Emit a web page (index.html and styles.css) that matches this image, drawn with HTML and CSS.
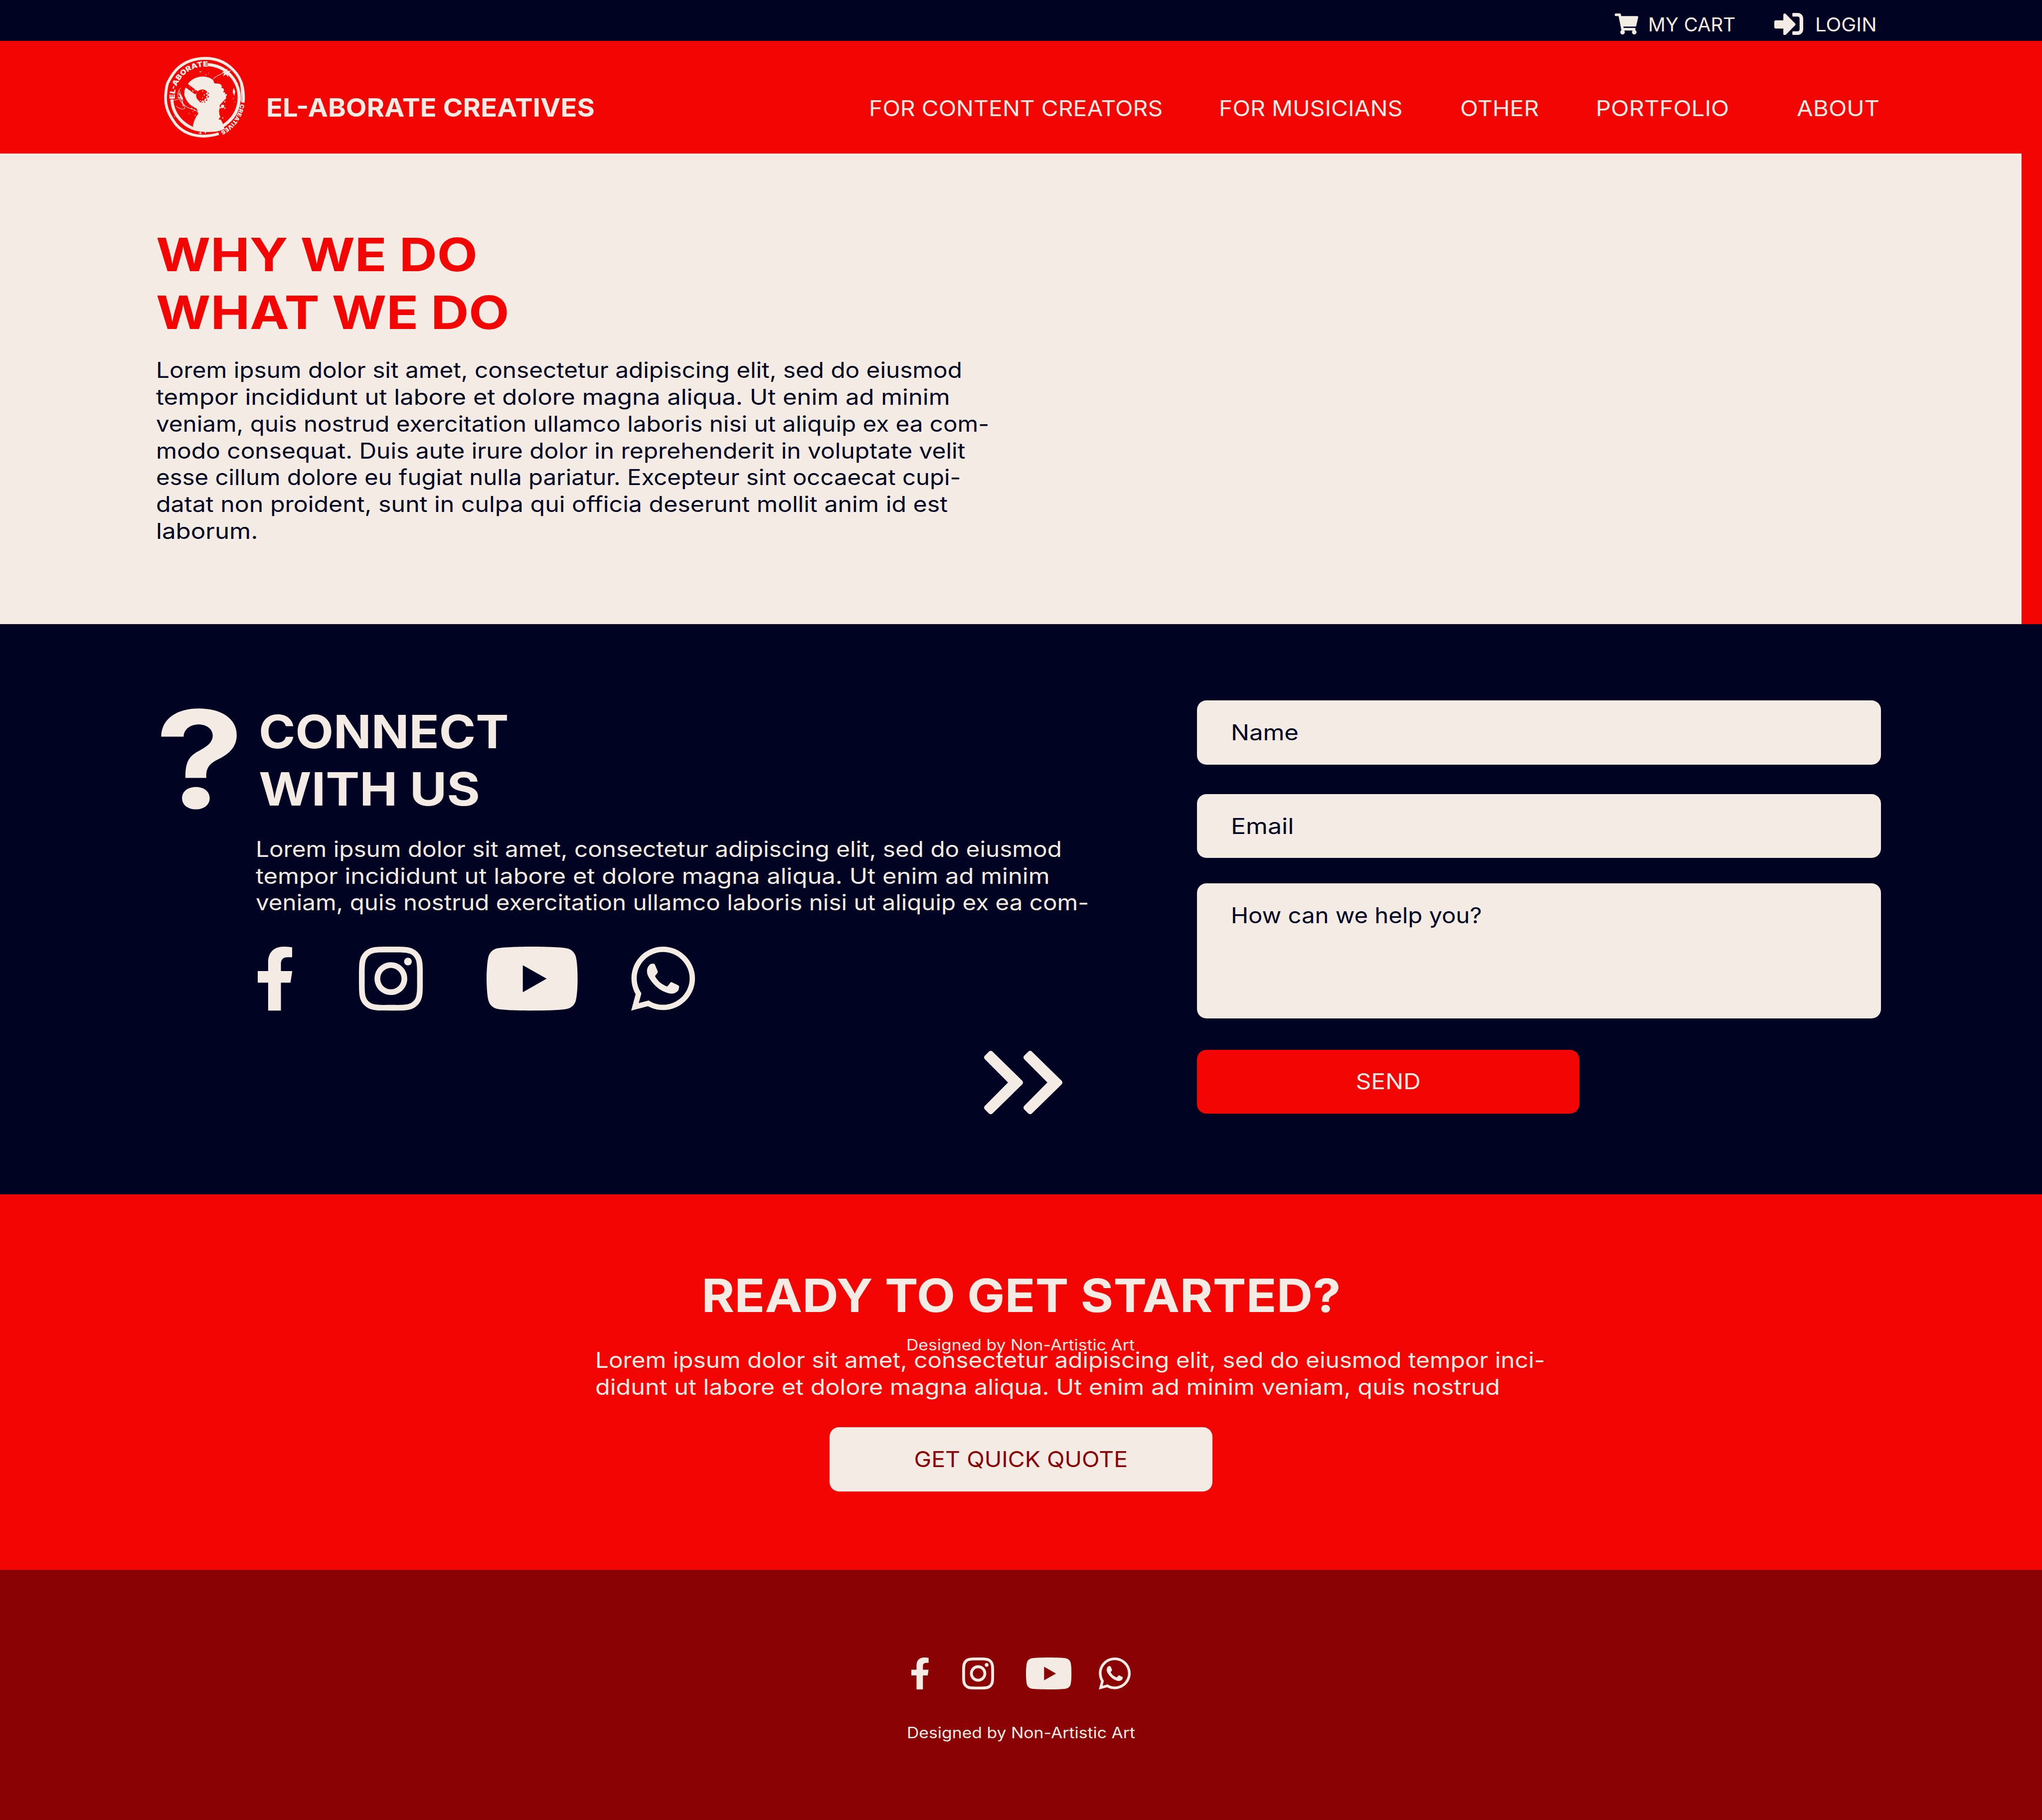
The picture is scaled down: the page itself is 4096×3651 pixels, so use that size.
FILE: index.html
```
<!DOCTYPE html>
<html lang="en">
<head>
<meta charset="utf-8">
<title>El-aborate Creatives</title>
<link rel="stylesheet" href="styles.css">
</head>
<body>
<svg class="sprite" aria-hidden="true">
  <symbol id="facebook" viewBox="22.9 0 270.5 512" preserveAspectRatio="none"><path d="M279.14 288l14.22-92.66h-88.91v-60.13c0-25.35 12.42-50.06 52.24-50.06h40.42V6.26S260.43 0 225.36 0c-73.22 0-121.08 44.38-121.08 124.72v70.62H22.89V288h81.39v224h100.17V288z"/></symbol>
  <symbol id="instagram" viewBox="0 32 448 448" preserveAspectRatio="none"><path d="M224.1 141c-63.6 0-114.9 51.3-114.9 114.9s51.3 114.9 114.9 114.9S339 319.5 339 255.9 287.7 141 224.1 141zm0 189.6c-41.1 0-74.7-33.5-74.7-74.7s33.5-74.7 74.7-74.7 74.7 33.5 74.7 74.7-33.6 74.7-74.7 74.7zm146.4-194.3c0 14.9-12 26.8-26.8 26.8-14.9 0-26.8-12-26.8-26.8s12-26.8 26.8-26.8 26.8 12 26.8 26.8zm76.1 27.2c-1.7-35.9-9.9-67.7-36.2-93.9-26.2-26.2-58-34.4-93.9-36.2-37-2.1-147.9-2.1-184.9 0-35.8 1.7-67.6 9.9-93.9 36.1s-34.4 58-36.2 93.9c-2.1 37-2.1 147.9 0 184.9 1.7 35.9 9.9 67.7 36.2 93.9s58 34.4 93.9 36.2c37 2.1 147.9 2.1 184.9 0 35.9-1.7 67.7-9.9 93.9-36.2 26.2-26.2 34.4-58 36.2-93.9 2.1-37 2.1-147.8 0-184.8zM398.8 388c-7.8 19.6-22.9 34.7-42.6 42.6-29.5 11.7-99.5 9-132.1 9s-102.7 2.6-132.1-9c-19.6-7.8-34.7-22.9-42.6-42.6-11.7-29.5-9-99.5-9-132.1s-2.6-102.7 9-132.1c7.8-19.6 22.9-34.7 42.6-42.6 29.5-11.7 99.5-9 132.1-9s102.7-2.6 132.1 9c19.6 7.8 34.7 22.9 42.6 42.6 11.7 29.5 9 99.5 9 132.1s2.7 102.7-9 132.1z"/></symbol>
  <symbol id="youtube" viewBox="14.9 64 546.2 384" preserveAspectRatio="none"><path d="M549.655 124.083c-6.281-23.65-24.787-42.276-48.284-48.597C458.781 64 288 64 288 64S117.22 64 74.629 75.486c-23.497 6.322-42.003 24.947-48.284 48.597-11.412 42.867-11.412 132.305-11.412 132.305s0 89.438 11.412 132.305c6.281 23.65 24.787 41.5 48.284 47.821C117.22 448 288 448 288 448s170.78 0 213.371-11.486c23.497-6.321 42.003-24.171 48.284-47.821 11.412-42.867 11.412-132.305 11.412-132.305s0-89.438-11.412-132.305zm-317.51 213.508V175.185l142.739 81.205-142.739 81.201z"/></symbol>
  <symbol id="whatsapp" viewBox="0 32 448 448" preserveAspectRatio="none"><path d="M380.9 97.1C339 55.1 283.2 32 223.9 32c-122.4 0-222 99.6-222 222 0 39.1 10.2 77.3 29.6 111L0 480l117.7-30.9c32.4 17.7 68.9 27 106.1 27h.1c122.3 0 224.1-99.6 224.1-222 0-59.3-25.2-115-67.1-157zm-157 341.6c-33.2 0-65.7-8.9-94-25.7l-6.7-4-69.8 18.3L72 359.2l-4.4-7c-18.5-29.4-28.2-63.3-28.2-98.2 0-101.7 82.8-184.5 184.6-184.5 49.3 0 95.6 19.2 130.4 54.1 34.8 34.9 56.2 81.2 56.1 130.5 0 101.8-84.9 184.6-186.6 184.6zm101.2-138.2c-5.5-2.8-32.8-16.2-37.9-18-5.1-1.9-8.8-2.8-12.5 2.8-3.7 5.6-14.3 18-17.6 21.8-3.2 3.7-6.5 4.2-12 1.4-32.6-16.3-54-29.1-75.5-66-5.7-9.8 5.7-9.1 16.3-30.3 1.8-3.7.9-6.9-.5-9.7-1.4-2.8-12.5-30.1-17.1-41.2-4.5-10.8-9.1-9.3-12.5-9.5-3.2-.2-6.9-.2-10.6-.2-3.7 0-9.7 1.4-14.8 6.9-5.1 5.6-19.4 19-19.4 46.3 0 27.3 19.9 53.7 22.6 57.4 2.8 3.7 39.1 59.7 94.8 83.8 35.2 15.2 49 16.5 66.6 13.9 10.7-1.6 32.8-13.4 37.4-26.4 4.6-13 4.6-24.1 3.2-26.4-1.3-2.5-5-3.9-10.5-6.6z"/></symbol>
</svg>

<div class="topbar">
  <svg class="cart-icon" viewBox="0 0 576 512" preserveAspectRatio="none"><path d="M528.12 301.319l47.273-208C578.806 78.301 567.391 64 551.99 64H159.208l-9.166-44.81C147.758 8.021 137.93 0 126.529 0H24C10.745 0 0 10.745 0 24v16c0 13.255 10.745 24 24 24h69.883l70.248 343.435C147.325 417.1 136 435.222 136 456c0 30.928 25.072 56 56 56s56-25.072 56-56c0-15.674-6.447-29.835-16.824-40h209.647C430.447 426.165 424 440.326 424 456c0 30.928 25.072 56 56 56s56-25.072 56-56c0-22.172-12.888-41.332-31.579-50.405l5.517-24.276c3.413-15.018-8.002-29.319-23.403-29.319H218.117l-6.545-32h293.145c11.206 0 20.92-7.754 23.403-18.681z"/></svg>
  <a class="fit cart">MY CART</a>
  <svg class="login-icon" viewBox="0 64 512 384" preserveAspectRatio="none"><path d="M416 448h-84c-6.6 0-12-5.4-12-12v-40c0-6.6 5.4-12 12-12h84c17.7 0 32-14.3 32-32V160c0-17.7-14.3-32-32-32h-84c-6.6 0-12-5.4-12-12V76c0-6.6 5.4-12 12-12h84c53 0 96 43 96 96v192c0 53-43 96-96 96zm-47-201L201 79c-15-15-41-4.5-41 17v96H24c-13.3 0-24 10.7-24 24v96c0 13.3 10.7 24 24 24h136v96c0 21.5 26 32 41 17l168-168c9.3-9.4 9.3-24.6 0-34z"/></svg>
  <a class="fit login">LOGIN</a>
</div>

<header class="header">
  <svg class="logo" viewBox="0 0 810 810">
    <defs>
      <path id="arc-top" d="M171 417A237 237 0 0 1 460 168"/>
      <path id="arc-side" d="M684 454A289 289 0 0 1 510 678"/>
    </defs>
    <g fill="none" stroke="#f3ebe4">
      <path stroke-width="22" d="M515 688C360 735 240 690 175 610C120 535 92 470 99 385C102 345 105 315 115 290C140 240 165 200 200 170C260 120 330 97 410 98C500 97 570 130 625 185C665 225 690 270 700 320C706 350 712 400 706 445"/>
      <path stroke-width="24" d="M147 420A257 257 0 0 0 405 662A257 257 0 0 0 428 147"/>
      <path stroke-width="7" d="M686 300Q696 370 690 440"/>
      <path stroke-width="4" d="M472 262Q475 245 555 210M205 350l20 50-30 5 40 15M195 365l35 40 5 70M180 472q35 28 62 22q20-8-15-45q-28-35-32-60q-5-30 22-60M212 400q20 80 95 95q30 5 52 35M160 428l40-10"/>
      <path stroke-width="9" d="M205 375l25 45M632 335v40"/>
    </g>
    <g fill="#f3ebe4">
      <path d="M395 240C430 242 460 255 472 270L480 292C495 298 515 292 530 302L540 315L535 328L553 335L556 350L549 362L565 365L565 382L572 390V412L552 432L522 465L523 485L517 510L520 540L528 555L513 575L532 580L545 605L560 650C510 676 455 676 400 674C365 668 335 650 312 630C318 590 335 555 357 528L340 490C300 475 260 440 246 390C242 360 248 335 258 322L275 295C300 262 340 240 395 240Z"/>
      <path d="M555 180l8 18 22-22-6 24 38-10-26 18 20 20-24-8 2 26-18-22-22 14 8-26-20-6 22-6zM630 335l14 20-8 38-12-34zM402 674l10 18 2-18zM355 685l22-12 2 18z"/>
      <circle cx="367" cy="203" r="4"/><circle cx="376" cy="203" r="4"/><circle cx="415" cy="227" r="4"/><circle cx="435" cy="214" r="3"/><circle cx="545" cy="474" r="13"/><circle cx="563" cy="488" r="6"/><circle cx="530" cy="484" r="6"/><circle cx="573" cy="384" r="7"/><circle cx="562" cy="438" r="5"/><circle cx="546" cy="565" r="5"/><circle cx="168" cy="554" r="4"/><circle cx="283" cy="530" r="4"/><circle cx="312" cy="515" r="3"/><circle cx="302" cy="490" r="5"/><circle cx="325" cy="505" r="5"/><circle cx="330" cy="545" r="4"/><circle cx="630" cy="412" r="4"/><circle cx="641" cy="440" r="3"/>
      <text class="seal-top"><textPath href="#arc-top" textLength="412" lengthAdjust="spacingAndGlyphs">EL-ABORATE</textPath></text>
      <text class="seal-side"><textPath href="#arc-side" textLength="276" lengthAdjust="spacingAndGlyphs">CREATIVES</textPath></text>
    </g>
    <g fill="#f30504">
      <path d="M240 312L270 296L352 358L330 380L254 325Z"/>
      <path d="M388 342C405 342 420 352 425 365L410 375L430 384L412 398L425 410L404 415L402 432L385 428L372 445L345 415C330 390 335 345 388 342Z"/>
      <circle cx="433" cy="372" r="5"/><circle cx="420" cy="425" r="6"/><circle cx="432" cy="398" r="6"/><circle cx="404" cy="440" r="5"/><circle cx="385" cy="442" r="4"/><circle cx="659" cy="278" r="5"/><circle cx="670" cy="308" r="4"/><circle cx="265" cy="145" r="5"/>
    </g>
    <g fill="#f3ebe4"><circle cx="312" cy="353" r="5"/><circle cx="328" cy="346" r="4"/><circle cx="286" cy="320" r="3"/><circle cx="390" cy="355" r="4"/><circle cx="402" cy="385" r="5"/><circle cx="388" cy="408" r="4"/><circle cx="372" cy="430" r="4"/></g>
  </svg>
  <div class="brand"><span class="fit">EL-ABORATE CREATIVES</span></div>
  <nav class="nav">
    <a class="fit nav-creators">FOR CONTENT CREATORS</a>
    <a class="fit nav-musicians">FOR MUSICIANS</a>
    <a class="fit nav-other">OTHER</a>
    <a class="fit nav-portfolio">PORTFOLIO</a>
    <a class="fit nav-about">ABOUT</a>
  </nav>
</header>

<section class="why">
  <h2 class="title title-why"><span class="fit w1">WHY WE DO</span><span class="fit w2">WHAT WE DO</span></h2>
  <p class="copy">
    <span class="fit t1">Lorem ipsum dolor sit amet, consectetur adipiscing elit, sed do eiusmod</span>
    <span class="fit t2">tempor incididunt ut labore et dolore magna aliqua. Ut enim ad minim</span>
    <span class="fit t3">veniam, quis nostrud exercitation ullamco laboris nisi ut aliquip ex ea com-</span>
    <span class="fit t4">modo consequat. Duis aute irure dolor in reprehenderit in voluptate velit</span>
    <span class="fit t5">esse cillum dolore eu fugiat nulla pariatur. Excepteur sint occaecat cupi-</span>
    <span class="fit t6">datat non proident, sunt in culpa qui officia deserunt mollit anim id est</span>
    <span class="fit t7">laborum.</span>
  </p>
</section>

<section class="connect">
  <div class="mark">?</div>
  <div class="connect-body">
    <h2 class="title title-connect"><span class="fit c1">CONNECT</span><span class="fit c2">WITH US</span></h2>
    <p class="copy">
      <span class="fit t1">Lorem ipsum dolor sit amet, consectetur adipiscing elit, sed do eiusmod</span>
      <span class="fit t2">tempor incididunt ut labore et dolore magna aliqua. Ut enim ad minim</span>
      <span class="fit t3">veniam, quis nostrud exercitation ullamco laboris nisi ut aliquip ex ea com-</span>
    </p>
    <div class="social">
      <svg class="fb"><use href="#facebook"/></svg>
      <svg class="ig"><use href="#instagram"/></svg>
      <svg class="yt"><use href="#youtube"/></svg>
      <svg class="wa"><use href="#whatsapp"/></svg>
    </div>
    <svg class="chevrons" viewBox="0 0 156.7 129.3">
      <path d="M13.3 6L73 64.6L13.3 123.3L5 115L55 64.6L5 14.3Z"/>
      <path d="M92.3 6L152 64.6L92.3 123.3L84 115L134 64.6L84 14.3Z"/>
    </svg>
  </div>
  <form class="form">
    <div class="field field-name"><span class="fit">Name</span></div>
    <div class="field field-email"><span class="fit">Email</span></div>
    <div class="field field-message"><span class="fit">How can we help you?</span></div>
    <div class="button send"><span class="fit centered">SEND</span></div>
  </form>
</section>

<section class="cta">
  <h2 class="title fit centered title-cta">READY TO GET STARTED?</h2>
  <div class="credit credit-overlay fit">Designed by Non-Artistic Art</div>
  <p class="copy cta-copy">
    <span class="fit q1">Lorem ipsum dolor sit amet, consectetur adipiscing elit, sed do eiusmod tempor inci-</span>
    <span class="fit q2">didunt ut labore et dolore magna aliqua. Ut enim ad minim veniam, quis nostrud</span>
  </p>
  <div class="button quote"><span class="fit centered">GET QUICK QUOTE</span></div>
</section>

<footer class="footer">
  <div class="social social-small">
    <svg class="fb"><use href="#facebook"/></svg>
    <svg class="ig"><use href="#instagram"/></svg>
    <svg class="yt"><use href="#youtube"/></svg>
    <svg class="wa"><use href="#whatsapp"/></svg>
  </div>
  <div class="credit fit centered">Designed by Non-Artistic Art</div>
</footer>
</body>
</html>
```
FILE: styles.css
```
* { box-sizing: border-box; }

:root {
  --cream: #f3ebe4;
  --red: #f30504;
  --navy: #000422;
  --maroon: #8a0203;
}

body {
  margin: 0;
  width: 4096px;
  height: 3651px;
  overflow: hidden;
  display: flex;
  flex-direction: column;
  font-family: Inter, "Liberation Sans", sans-serif;
  font-size: 43.1px;
  line-height: 53.76px;
  color: var(--cream);
  background: var(--maroon);
  white-space: nowrap;
}

svg { display: block; fill: currentColor; }
.sprite { position: absolute; width: 0; height: 0; }
h2, p { margin: 0; }

/* Widened lettering: --s is the horizontal stretch of a line */
.fit {
  display: block;
  width: max-content;
  transform: scaleX(var(--s, 1));
  transform-origin: left;
}
.fit.centered { margin-left: auto; margin-right: auto; transform-origin: center; }

/* Top bar */
.topbar {
  height: 82.2px;
  flex: none;
  padding: 26.1px 0 0 3238.9px;
  display: grid;
  grid-template-columns: 66.9px 253.2px 81.8px auto;
  align-items: start;
  background: var(--navy);
  font-size: 37.7px;
  line-height: 47.4px;
}
.cart-icon { width: 47px; height: 42.2px; margin-top: 0.8px; }
.login-icon { width: 58px; height: 44px; }
.cart { --s: 1.021; }
.login { --s: 1.067; }

/* Header */
.header {
  height: 225.5px;
  flex: none;
  display: flex;
  align-items: flex-start;
  padding-left: 307.2px;
  background: var(--red);
}
.logo { width: 207.4px; height: 207.4px; margin-top: 10px; flex: none; }
.seal-top { font-size: 56px; font-weight: 900; }
.seal-side { font-size: 45px; font-weight: 900; }
.brand {
  --s: 1.054;
  width: 1209.2px;
  margin: 102.9px 0 0 19px;
  font-size: 51.4px;
  line-height: 60px;
  font-weight: 700;
}
.nav {
  margin-top: 108.8px;
  display: grid;
  grid-template-columns: 702.2px 483.7px 272px 403.8px auto;
}
.nav-creators { --s: 1.0765; }
.nav-musicians { --s: 1.079; }
.nav-other { --s: 1.088; }
.nav-portfolio { --s: 1.0986; }
.nav-about { --s: 1.103; }

/* Shared text */
.title { font-size: 92.4px; line-height: 115.2px; font-weight: 700; }
.title-why { color: var(--red); }
.w1 { --s: 1.139; }
.w2 { --s: 1.141; }
.title-connect { margin-left: 6.5px; }
.c1 { --s: 1.075; }
.c2 { --s: 1.103; }
.title-cta { --s: 1.088; }
.t1 { --s: 1.1063; }
.t2 { --s: 1.136; }
.t3 { --s: 1.104; }
.t4 { --s: 1.112; }
.t5 { --s: 1.0987; }
.t6 { --s: 1.121; }
.t7 { --s: 1.144; }
.q1 { --s: 1.1067; }
.q2 { --s: 1.127; }

/* Why we do what we do */
.why {
  height: 944.5px;
  flex: none;
  padding: 145.8px 0 0 313px;
  background: var(--cream);
  border-right: 41px solid var(--red);
}
.why .copy { margin-top: 32.4px; color: var(--navy); }

/* Connect */
.connect {
  height: 1143.4px;
  flex: none;
  display: flex;
  align-items: flex-start;
  padding: 157.8px 0 0 311.2px;
  background: var(--navy);
}
.mark {
  width: 201.5px;
  margin-top: -23.4px;
  font-size: 271px;
  line-height: 270px;
  font-weight: 700;
  transform: scaleX(1.18);
  transform-origin: left;
}
.connect-body { width: 1887.9px; }
.connect-body .copy { margin-top: 36.5px; }
.social { display: flex; margin: 61.1px 0 0 4.3px; }
.social svg { height: 128.4px; }
.fb { width: 69.3px; }
.ig { width: 128.1px; margin-left: 133.6px; }
.yt { width: 182.8px; margin-left: 128.2px; }
.wa { width: 128.1px; margin-left: 107.5px; }
.chevrons {
  width: 156.7px;
  height: 129.3px;
  margin: 79.2px 0 0 1461.3px;
  stroke: currentColor;
  stroke-width: 10;
  stroke-linejoin: round;
}

.form { margin-top: -5.1px; width: 1372.9px; }
.field {
  height: 128.7px;
  padding: 38.2px 0 0 68.4px;
  border-radius: 19px;
  background: var(--cream);
  color: var(--navy);
}
.field-name { --s: 1.137; }
.field-email { --s: 1.162; margin-top: 59.1px; }
.field-message { --s: 1.096; margin-top: 50.2px; height: 271.6px; }
.button {
  width: 767.9px;
  height: 128.5px;
  padding-top: 37.6px;
  border-radius: 19px;
}
.send { --s: 1.113; margin-top: 62.4px; background: var(--red); }

/* Call to action */
.cta {
  position: relative;
  height: 753.3px;
  flex: none;
  display: flex;
  flex-direction: column;
  align-items: center;
  padding-top: 145.8px;
  background: var(--red);
}
.cta-copy { align-self: flex-start; margin: 45.6px 0 0 1194px; }
.quote {
  --s: 1.078;
  margin-top: 53.7px;
  background: var(--cream);
  color: var(--maroon);
}
.credit { --s: 1.0957; font-size: 30.8px; line-height: 40px; }
.credit-overlay { position: absolute; top: 282px; left: 1818.4px; }

/* Footer */
.footer {
  flex: 1;
  display: flex;
  flex-direction: column;
  align-items: center;
  padding-top: 176.5px;
  background: var(--maroon);
}
.social-small { margin: 0; }
.social-small svg { height: 64.2px; }
.social-small .fb { width: 34.7px; }
.social-small .ig { width: 64px; margin-left: 67.2px; }
.social-small .yt { width: 91.4px; margin-left: 64.1px; }
.social-small .wa { width: 64px; margin-left: 53.8px; }
.footer .credit { margin-top: 66.4px; }
```
